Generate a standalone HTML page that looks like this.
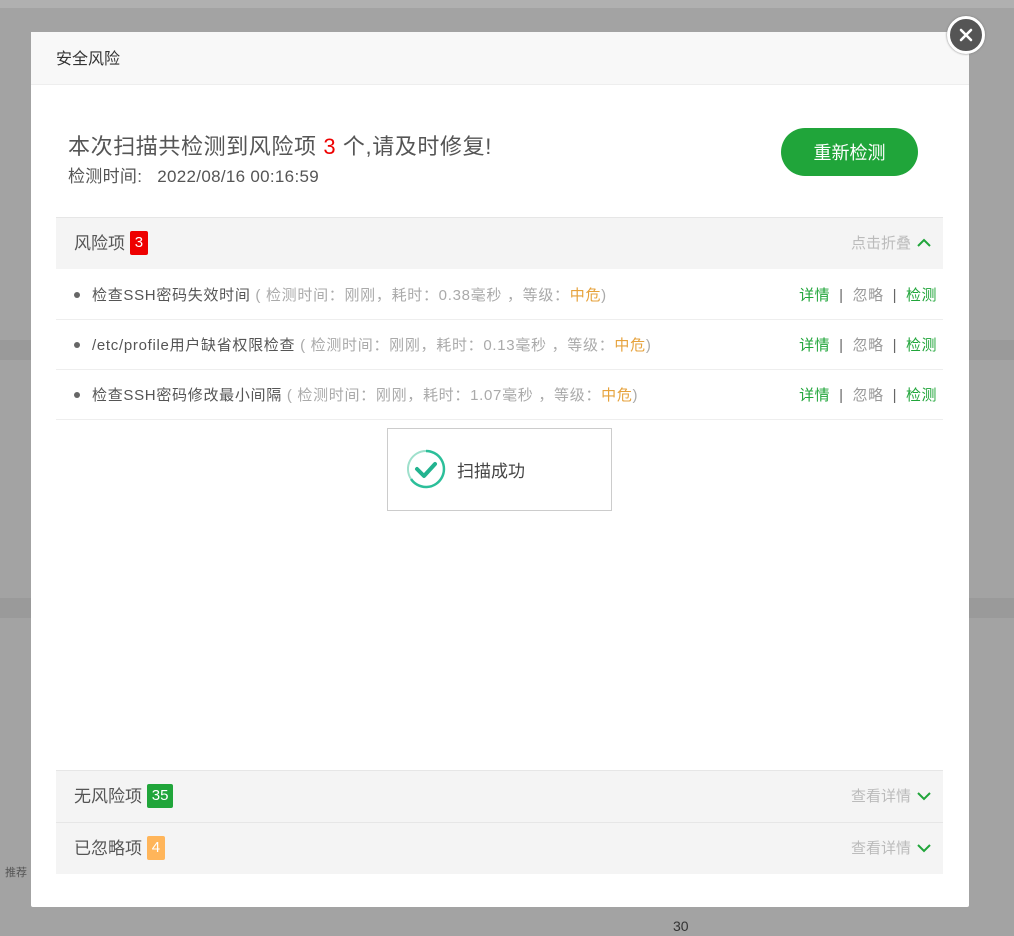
<!DOCTYPE html>
<html><head><meta charset="utf-8"><style>
*{margin:0;padding:0;box-sizing:border-box}
body{width:1014px;height:936px;background:#a3a3a3;position:relative;overflow:hidden;font-family:"Liberation Sans","Noto Sans CJK SC",sans-serif;color:#333}
.band{position:absolute;left:0;width:1014px;background:#9a9a9a}
.modal{position:absolute;left:31px;top:32px;width:938px;height:875px;background:#fff;border-radius:2px}
.hd{height:53px;background:#f8f8f8;border-bottom:1px solid #eee;padding-left:25px;line-height:55px;font-size:16px;color:#333}
.close{position:absolute;left:947px;top:16px;width:38px;height:38px;border-radius:50%;background:#555;border:3px solid #fff;box-shadow:0 0 2px #777}
.t1{position:absolute;left:37px;top:97px;font-size:22px;color:#555;letter-spacing:0.6px}
.t2{position:absolute;left:37px;top:130px;font-size:17px;color:#555;letter-spacing:0.3px}
.btn{position:absolute;left:750px;top:96px;width:137px;height:48px;border-radius:24px;background:#20a53a;color:#fff;font-size:18px;text-align:center;line-height:50px}
.sec{position:absolute;left:25px;width:887px;height:52px;background:#f4f4f4;border-top:1px solid #e6e6e6;font-size:17px;line-height:52px;padding-left:18px;color:#555}
.badge{display:inline-block;color:#fff;font-size:15px;height:24px;line-height:24px;padding:0 5px;border-radius:2px;vertical-align:middle;margin-top:-3px}
.rt{position:absolute;right:12px;top:0;font-size:15px;color:#bbb}
.rt svg{margin-left:6px;vertical-align:middle;margin-top:-3px}
.row{position:absolute;left:25px;width:887px;height:50px;border-bottom:1px solid #eee;line-height:52px;font-size:15px;color:#555;padding-left:36px;letter-spacing:0.7px}
.row:before{content:"";position:absolute;left:18px;top:22px;width:6px;height:6px;border-radius:50%;background:#666}
.g{color:#aaa}.o{color:#e6a23c}
.ac{position:absolute;right:6px;top:0;color:#999;letter-spacing:0.5px}
.ac b{font-weight:normal;color:#20a53a}
.ac s{text-decoration:none;color:#666;margin:0 9px}
.toast{position:absolute;left:356px;top:396px;width:225px;height:83px;border:1px solid #ccc;background:#fff}
</style></head><body>
<div class="band" style="top:0;height:8px;background:#b0b0b0"></div>
<div class="band" style="top:340px;height:20px"></div>
<div class="band" style="top:598px;height:20px"></div>
<div style="position:absolute;left:5px;top:864px;font-size:11px;color:#555">推荐</div>
<div style="position:absolute;left:673px;top:918px;font-size:14px;color:#333">30</div>
<div class="modal">
<div class="hd">安全风险</div>
<div class="t1">本次扫描共检测到风险项 <span style="color:#e00">3</span> 个,请及时修复!</div>
<div class="t2">检测时间:&nbsp;&nbsp; 2022/08/16 00:16:59</div>
<div class="btn">重新检测</div>
<div class="sec" style="top:185px">风险项 <span class="badge" style="background:#e00">3</span><span class="rt">点击折叠<svg width="14" height="10" viewBox="0 0 14 10"><path d="M1 8 L7 2 L13 8" fill="none" stroke="#20a53a" stroke-width="2"/></svg></span></div>
<div class="row" style="top:238px">检查SSH密码失效时间 <span class="g">( 检测时间：刚刚，耗时：0.38毫秒 ，等级：</span><span class="o">中危</span><span class="g">)</span><span class="ac"><b>详情</b><s>|</s>忽略<s>|</s><b>检测</b></span></div>
<div class="row" style="top:288px">/etc/profile用户缺省权限检查 <span class="g">( 检测时间：刚刚，耗时：0.13毫秒 ，等级：</span><span class="o">中危</span><span class="g">)</span><span class="ac"><b>详情</b><s>|</s>忽略<s>|</s><b>检测</b></span></div>
<div class="row" style="top:338px">检查SSH密码修改最小间隔 <span class="g">( 检测时间：刚刚，耗时：1.07毫秒 ，等级：</span><span class="o">中危</span><span class="g">)</span><span class="ac"><b>详情</b><s>|</s>忽略<s>|</s><b>检测</b></span></div>
<div class="toast">
<svg width="40" height="40" viewBox="0 0 40 40" style="position:absolute;left:18px;top:20px"><path d="M20 2 A18 18 0 1 1 5 30" fill="none" stroke="#2cbf9a" stroke-width="2.5"/><path d="M5 30 A18 18 0 0 1 20 2" fill="none" stroke="#9fe0cc" stroke-width="2"/><path d="M11 20 L18 27 L29 15" fill="none" stroke="#22b38f" stroke-width="4" stroke-linecap="round" stroke-linejoin="round"/></svg>
<div style="position:absolute;left:69px;top:28px;font-size:17px;color:#444">扫描成功</div>
</div>
<div class="sec" style="top:738px">无风险项 <span class="badge" style="background:#20a53a">35</span><span class="rt">查看详情<svg width="14" height="10" viewBox="0 0 14 10"><path d="M1 2 L7 8 L13 2" fill="none" stroke="#20a53a" stroke-width="2"/></svg></span></div>
<div class="sec" style="top:790px">已忽略项 <span class="badge" style="background:#ffb55a">4</span><span class="rt">查看详情<svg width="14" height="10" viewBox="0 0 14 10"><path d="M1 2 L7 8 L13 2" fill="none" stroke="#20a53a" stroke-width="2"/></svg></span></div>
</div>
<div class="close"><svg width="32" height="32" viewBox="0 0 32 32"><path d="M11 11 L21 21 M21 11 L11 21" stroke="#fff" stroke-width="2.6" stroke-linecap="round"/></svg></div>
</body></html>
